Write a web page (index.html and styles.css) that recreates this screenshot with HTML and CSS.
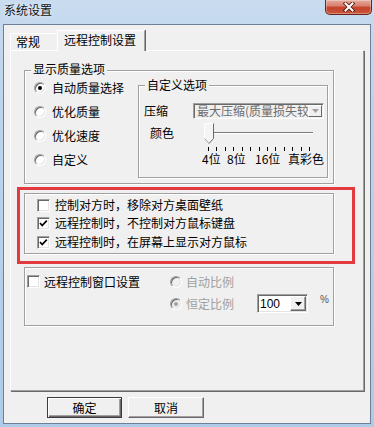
FILE: index.html
```html
<!DOCTYPE html>
<html lang="zh-CN">
<head>
<meta charset="utf-8">
<title>系统设置</title>
<link rel="stylesheet" href="styles.css">
</head>
<body>
<div class="window">
  <div class="titlebar">
    <span class="title">系统设置</span>
    <div class="close">
      <svg width="14" height="10" viewBox="0 0 14 10">
        <path d="M3.5 1.5 L10.5 8.5 M10.5 1.5 L3.5 8.5" stroke="#5a1a10" stroke-width="3.8" stroke-linecap="square" fill="none"/>
        <path d="M3.5 1.5 L10.5 8.5 M10.5 1.5 L3.5 8.5" stroke="#ffffff" stroke-width="2" stroke-linecap="square" fill="none"/>
      </svg>
    </div>
  </div>
  <div class="client">
    <div class="tabs">
      <div class="tab tab-general">常规</div>
      <div class="tab tab-active">远程控制设置</div>
    </div>
    <div class="panel">
      <div class="group g-quality">
        <div class="legend">显示质量选项</div>
        <div class="q-body">
          <div class="radios">
            <div class="opt"><span class="radio on"></span>自动质量选择</div>
            <div class="opt"><span class="radio"></span>优化质量</div>
            <div class="opt"><span class="radio"></span>优化速度</div>
            <div class="opt"><span class="radio"></span>自定义</div>
          </div>
          <div class="group g-custom">
            <div class="legend legend-sm">自定义选项</div>
            <div class="c-row">
              <span class="c-label">压缩</span>
              <div class="combo">
                <span class="combo-text">最大压缩(质量损失较大)</span>
                <span class="combo-btn">
                  <svg width="7" height="4" viewBox="0 0 7 4"><polygon points="0,0 7,0 3.5,4" fill="#a0a0a0"/></svg>
                </span>
              </div>
            </div>
            <div class="s-row">
              <span class="s-label">颜色</span>
              <svg class="slider" width="112" height="28" viewBox="0 0 112 28">
                <rect x="9" y="9" width="100" height="1" fill="#7a7a7a"/>
                <rect x="9" y="10" width="100" height="1" fill="#ffffff"/>
                <polygon points="0.5,0.5 9.5,0.5 9.5,15.5 5,20.5 0.5,15.5" fill="#f4f4f4"/>
                <polyline points="0.5,16 0.5,0.5 9,0.5" fill="none" stroke="#ffffff"/>
                <polyline points="9.5,0.5 9.5,15.5 5,20.5" fill="none" stroke="#696969"/>
                <polyline points="0.5,15.5 5,20.5" fill="none" stroke="#a0a0a0"/>
                <path d="M4.5 24v4M12.5 24v4M21.5 24v4M29.5 24v4M38.5 24v4M46.5 24v4M55.5 24v4M63.5 24v4M71.5 24v4M80.5 24v4M88.5 24v4M97.5 24v4M105.5 24v4" stroke="#000" stroke-width="1"/>
              </svg>
            </div>
            <div class="t-labels"><span class="tl1">4位</span><span class="tl2">8位</span><span class="tl3">16位</span><span>真彩色</span></div>
          </div>
        </div>
      </div>

      <div class="highlight">
        <div class="group g-checks">
          <div class="cb-row"><span class="cb"></span>控制对方时，移除对方桌面壁纸</div>
          <div class="cb-row"><span class="cb">
            <svg width="11" height="11" viewBox="0 0 11 11"><polyline points="2,5 4.2,7.5 8.8,2.6" fill="none" stroke="#000" stroke-width="1.7"/></svg>
          </span>远程控制时，不控制对方鼠标键盘</div>
          <div class="cb-row cb-row-last"><span class="cb">
            <svg width="11" height="11" viewBox="0 0 11 11"><polyline points="2,5 4.2,7.5 8.8,2.6" fill="none" stroke="#000" stroke-width="1.7"/></svg>
          </span>远程控制时，在屏幕上显示对方鼠标</div>
        </div>
      </div>

      <div class="group g-window">
        <div class="cell"><span class="cb"></span>远程控制窗口设置</div>
        <div class="cell dis"><span class="radio radio-dis"></span>自动比例</div>
        <div></div>
        <div class="cell dis">
          <span class="radio radio-dis on"></span>恒定比例
          <div class="combo2">
            <span class="c2-text">100</span>
            <span class="c2-btn">
              <svg width="7" height="4" viewBox="0 0 7 4"><polygon points="0,0 7,0 3.5,4" fill="#000"/></svg>
            </span>
          </div>
          <span class="pct">%</span>
        </div>
      </div>
    </div>
    <div class="buttons">
      <div class="btn btn-default">确定</div>
      <div class="btn">取消</div>
    </div>
  </div>
</div>
</body>
</html>
```

FILE: styles.css
```css
* { box-sizing: border-box; }
html, body { margin: 0; padding: 0; }
body {
  width: 374px;
  height: 427px;
  overflow: hidden;
  font-family: "Noto Sans CJK SC", "Noto Sans", sans-serif;
  font-size: 12px;
  color: #000;
}

.window {
  width: 374px;
  height: 427px;
  background: linear-gradient(180deg, #c8dbef 0%, #bed4ec 20%, #aecbe8 100%);
  display: flex;
  flex-direction: column;
}

.titlebar {
  height: 24px;
  flex: none;
  display: flex;
  align-items: flex-start;
}
.title {
  margin: 3px 0 0 4px;
  line-height: 14px;
  color: #111;
  text-shadow: 0 0 5px #e8f1fa, 0 0 2px #e8f1fa;
}
.close {
  margin-left: auto;
  margin-right: 2px;
  width: 47px;
  height: 15px;
  border: 1px solid #6b2418;
  border-top: none;
  border-radius: 0 0 5px 5px;
  background: linear-gradient(180deg, #e6ab9c 0%, #d8826f 40%, #c4412a 55%, #c85a3e 100%);
  box-shadow: inset 0 0 0 1px rgba(255, 255, 255, 0.3);
  display: flex;
  align-items: center;
  justify-content: center;
}

.client {
  margin: 0 3px;
  width: 368px;
  height: 400px;
  background: #f0f0f0;
  border: 1px solid #6d8096;
}

.tabs {
  display: flex;
  align-items: flex-end;
  height: 20px;
  margin: 5px 0 0 6px;
  position: relative;
  z-index: 1;
}
.tab {
  border-top: 1px solid #fff;
  border-left: 1px solid #fff;
  border-right: 1px solid #a0a0a0;
  white-space: nowrap;
}
.tab-general {
  width: 47px;
  height: 17px;
  padding-left: 5px;
  line-height: 16px;
  border-right: none;
}
.tab-active {
  width: 88px;
  height: 21px;
  margin-bottom: -1px;
  padding: 1px 0 0 6px;
  line-height: 16px;
  background: #f0f0f0;
  box-shadow: 1px 0 0 #696969;
}

.panel {
  margin-left: 6px;
  width: 354px;
  height: 341px;
  border-top: 1px solid #fff;
  border-left: 1px solid #fff;
  border-right: 1px solid #a0a0a0;
  border-bottom: 1px solid #a0a0a0;
  box-shadow: 1px 1px 0 #696969;
  padding: 19px 0 0 13px;
}

.group {
  border: 1px solid #a0a0a0;
  box-shadow: 1px 1px 0 #fff, inset 1px 1px 0 #fff;
}
.legend {
  display: table;
  margin: -9px 0 0 6px;
  padding: 0 2px;
  line-height: 14px;
  background: #f0f0f0;
}
.legend-sm { margin-top: -8px; }

.g-quality {
  width: 310px;
  height: 114px;
}
.q-body {
  display: flex;
  align-items: flex-start;
}
.radios {
  width: 113px;
  padding-left: 9px;
}
.opt {
  height: 24px;
  display: flex;
  align-items: center;
  gap: 6px;
  line-height: 14px;
}
.radio {
  flex: none;
  position: relative;
  width: 12px;
  height: 12px;
  border-radius: 50%;
  border: 1px solid;
  border-color: #a0a0a0 #fff #fff #a0a0a0;
  background: #fff;
  box-shadow: inset 1px 1px 0 #696969, inset -1px -1px 0 #e3e3e3;
}
.radio.on::after {
  content: "";
  position: absolute;
  left: 3px;
  top: 3px;
  width: 4px;
  height: 4px;
  border-radius: 50%;
  background: #000;
}
.radio-dis { background: #f0f0f0; }
.radio-dis.on::after { background: #a0a0a0; }

.g-custom {
  width: 190px;
  height: 93px;
  margin-top: 9px;
}
.c-row {
  display: flex;
  align-items: center;
  margin-top: 11px;
  height: 16px;
}
.c-label {
  width: 54px;
  padding-left: 5px;
  line-height: 14px;
}
.combo {
  width: 131px;
  height: 16px;
  border: 1px solid;
  border-color: #a0a0a0 #fff #fff #a0a0a0;
  box-shadow: inset 1px 1px 0 #696969;
  background: #f0f0f0;
  display: flex;
  align-items: center;
  overflow: hidden;
}
.combo-text {
  flex: 1;
  min-width: 0;
  overflow: hidden;
  white-space: nowrap;
  padding-left: 3px;
  line-height: 14px;
  color: #6d6d6d;
}
.combo-btn {
  flex: none;
  width: 14px;
  height: 12px;
  margin-right: 1px;
  border: 1px solid;
  border-color: #fff #696969 #696969 #fff;
  display: flex;
  align-items: center;
  justify-content: center;
}

.s-row {
  display: flex;
  align-items: flex-start;
  margin-top: 4px;
}
.s-label {
  width: 65px;
  padding-left: 11px;
  margin-top: 2px;
  line-height: 16px;
}
.slider { display: block; }
.t-labels {
  display: flex;
  padding-left: 63px;
  margin-top: 1px;
  line-height: 14px;
  white-space: nowrap;
}
.tl1 { width: 25px; }
.tl2 { width: 28px; }
.tl3 { width: 33px; }

.highlight {
  margin: 3px 0 0 -7px;
  width: 338px;
  border: 3px solid #e23a3f;
  padding: 3px 0 7px 4px;
}
.g-checks {
  width: 310px;
  height: 61px;
  padding: 2px 0 0 12px;
}
.cb-row {
  height: 18px;
  display: flex;
  align-items: center;
  gap: 5px;
  line-height: 14px;
}
.cb-row-last { margin-top: 1px; }
.cb {
  flex: none;
  width: 13px;
  height: 13px;
  border: 1px solid;
  border-color: #a0a0a0 #fff #fff #a0a0a0;
  box-shadow: inset 1px 1px 0 #696969, inset -1px -1px 0 #e3e3e3;
  background: #fff;
  display: flex;
}
.cb svg { display: block; }

.g-window {
  margin-top: 3px;
  width: 310px;
  height: 59px;
  padding: 5px 0 0 2px;
  display: grid;
  grid-template-columns: 143px auto;
  grid-template-rows: 17px 19px;
  row-gap: 4px;
}
.cell {
  display: flex;
  align-items: center;
  gap: 4px;
  line-height: 14px;
  white-space: nowrap;
}
.dis { color: #a0a0a0; }
.combo2 {
  margin-left: 19px;
  width: 51px;
  height: 19px;
  border: 1px solid;
  border-color: #a0a0a0 #fff #fff #a0a0a0;
  box-shadow: inset 1px 1px 0 #696969, inset -1px -1px 0 #e3e3e3;
  background: #fff;
  display: flex;
  align-items: center;
}
.c2-text {
  flex: 1;
  padding-left: 2px;
  color: #000;
  font-family: "Liberation Sans", "Noto Sans", sans-serif;
  font-size: 12px;
}
.c2-btn {
  flex: none;
  width: 16px;
  height: 15px;
  margin-right: 1px;
  border: 1px solid;
  border-color: #fff #696969 #696969 #fff;
  box-shadow: inset -1px -1px 0 #a0a0a0;
  background: #f0f0f0;
  display: flex;
  align-items: center;
  justify-content: center;
}
.pct {
  align-self: flex-start;
  margin: 1px 0 0 8px;
  font-family: "Liberation Sans", sans-serif;
  font-size: 10px;
  line-height: 10px;
  color: #555;
}

.buttons {
  display: flex;
  gap: 6px;
  margin: 6px 0 0 43px;
}
.btn {
  width: 76px;
  height: 21px;
  border: 1px solid;
  border-color: #fff #696969 #696969 #fff;
  box-shadow: inset -1px -1px 0 #a0a0a0;
  display: flex;
  align-items: center;
  justify-content: center;
  line-height: 14px;
}
.btn-default {
  width: 75px;
  border: 1px solid #3c3c3c;
  box-shadow: inset 1px 1px 0 #fff, inset -1px -1px 0 #696969, inset -2px -2px 0 #a0a0a0;
}
```
